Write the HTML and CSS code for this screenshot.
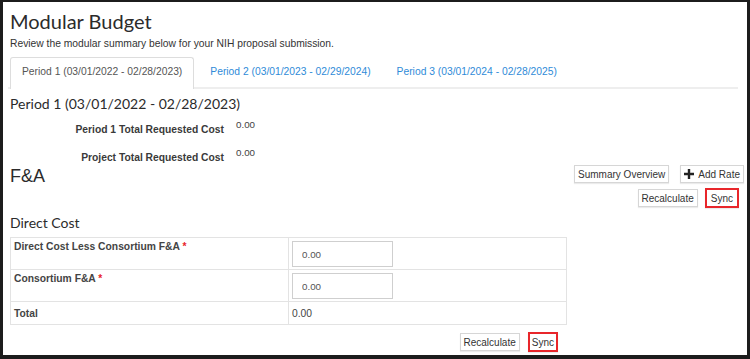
FILE: index.html
```html
<!DOCTYPE html>
<html lang="en">
<head>
    <meta charset="UTF-8">
    <meta name="viewport" content="width=device-width, initial-scale=1.0">
    <title>Modular Budget</title>
    <link rel="stylesheet" href="styles.css">
</head>
<body>
<div class="frame">
    <h1 class="page-title">Modular Budget</h1>
    <p class="page-desc">Review the modular summary below for your NIH proposal submission.</p>

    <ul class="tabs">
        <li class="tab active">Period 1 (03/01/2022 - 02/28/2023)</li>
        <li class="tab">Period 2 (03/01/2023 - 02/29/2024)</li>
        <li class="tab">Period 3 (03/01/2024 - 02/28/2025)</li>
    </ul>

    <h2 class="period-title">Period 1 (03/01/2022 - 02/28/2023)</h2>
    <div class="cost-list">
        <div class="cost-row">
            <span class="cost-label">Period 1 Total Requested Cost</span>
            <span class="cost-value">0.00</span>
        </div>
        <div class="cost-row">
            <span class="cost-label">Project Total Requested Cost</span>
            <span class="cost-value">0.00</span>
        </div>
    </div>

    <div class="fa-head">
        <h2 class="fa-title">F&amp;A</h2>
        <div class="fa-actions">
            <div class="btn-row wide">
                <button class="btn">Summary Overview</button>
                <button class="btn">
                    <svg width="10" height="10" viewBox="0 0 10 10"><path d="M5 0v10M0 5h10" stroke="#222" stroke-width="2.4"/></svg>
                    Add Rate
                </button>
            </div>
            <div class="btn-row">
                <button class="btn">Recalculate</button>
                <button class="btn btn-mark">Sync</button>
            </div>
        </div>
    </div>

    <h3 class="section-title">Direct Cost</h3>
    <div class="cost-table-wrap">
        <table class="cost-table">
            <tr>
                <td class="label-cell">Direct Cost Less Consortium F&amp;A <span class="req">*</span></td>
                <td><input type="text" class="cost-input" value="0.00"></td>
            </tr>
            <tr>
                <td class="label-cell">Consortium F&amp;A <span class="req">*</span></td>
                <td><input type="text" class="cost-input" value="0.00"></td>
            </tr>
            <tr class="total-row">
                <td class="label-cell">Total</td>
                <td class="total-value">0.00</td>
            </tr>
        </table>
        <div class="btn-row table-actions">
            <button class="btn">Recalculate</button>
            <button class="btn btn-mark btn-mark-sm">Sync</button>
        </div>
    </div>
</div>
</body>
</html>
```

FILE: styles.css
```css
:root {
    --text-color: #333333;
    --muted-color: #555555;
    --link-color: #2f8bd8;
    --border-color: #dddddd;
    --mark-color: #e8262b;
}

* {
    box-sizing: border-box;
    margin: 0;
    padding: 0;
}

body {
    font-family: "Liberation Sans", Arial, sans-serif;
    font-size: 10.3px;
    color: var(--text-color);
    background: #ffffff;
}

.frame {
    width: 750px;
    height: 359px;
    border-style: solid;
    border-color: #1c1c1c;
    border-width: 2px 3px 4px 3px;
    padding: 0 3px 0 5px;
    overflow: hidden;
}

.page-title {
    font-family: Lato, "Open Sans", sans-serif;
    font-weight: 400;
    font-size: 20px;
    line-height: 24px;
    margin-top: 7px;
    margin-left: 2px;
    color: #2b2b2b;
}

.page-desc {
    font-size: 10.3px;
    line-height: 14px;
    margin-top: 4px;
    margin-left: 2px;
}

.tabs {
    list-style: none;
    display: flex;
    margin-top: 6px;
    border-bottom: 2px solid #eeeeee;
    margin-right: 6px;
}

.tab {
    height: 30px;
    line-height: 28px;
    padding: 0 12px;
    font-size: 10.3px;
    color: var(--link-color);
    border: 1px solid transparent;
    border-bottom: none;
    margin-bottom: -2px;
    text-align: center;
}

.tab.active {
    color: var(--muted-color);
    background: #ffffff;
    border-color: var(--border-color);
    border-radius: 3px 3px 0 0;
    height: 32px;
    margin-left: 2px;
    margin-right: 3px;
    padding: 0 11px;
}

.period-title {
    font-family: Lato, "Open Sans", sans-serif;
    font-weight: 400;
    font-size: 14px;
    line-height: 18px;
    margin-top: 6px;
    margin-left: 2px;
    color: #2b2b2b;
}

.cost-list {
    display: flex;
    flex-direction: column;
    gap: 12px;
    margin-top: 6px;
}

.cost-row {
    display: flex;
    align-items: flex-start;
    height: 16px;
}

.cost-label {
    width: 216px;
    text-align: right;
    font-weight: bold;
    font-size: 10.3px;
    padding-top: 5px;
    color: #3a3a3a;
}

.cost-value {
    margin-left: 12px;
    font-size: 9.8px;
    color: #444;
}

.fa-head {
    display: flex;
    justify-content: space-between;
    align-items: flex-start;
    margin-top: 2px;
}

.fa-title {
    font-family: "Liberation Sans", Arial, sans-serif;
    font-weight: 400;
    font-size: 18px;
    line-height: 20px;
    margin-top: 1px;
    margin-left: 2px;
    color: #2b2b2b;
}

.fa-actions {
    display: flex;
    flex-direction: column;
    align-items: flex-end;
    gap: 5px;
    margin-top: 0;
}

.btn-row {
    display: flex;
    gap: 7px;
    align-items: center;
}

.btn-row.wide {
    gap: 11px;
}

.fa-actions .btn-row:last-child {
    margin-right: 5px;
}

.btn {
    font-family: "Liberation Sans", Arial, sans-serif;
    font-size: 10px;
    color: #333;
    background: #ffffff;
    border: 1px solid #d6d6d6;
    box-shadow: 0 1px 1px rgba(0, 0, 0, 0.08);
    height: 18px;
    padding: 0 3px;
    display: inline-flex;
    align-items: center;
    gap: 4px;
}

.btn-mark {
    border: 2px solid var(--mark-color);
    height: 20px;
    padding: 0 4px;
}

.btn-mark-sm {
    padding: 0 2px;
}

.section-title {
    font-family: Lato, "Open Sans", sans-serif;
    font-weight: 400;
    font-size: 14px;
    line-height: 18px;
    margin-top: 6px;
    margin-left: 2px;
    color: #2b2b2b;
}

.cost-table-wrap {
    width: 557px;
    margin-left: 2px;
    margin-top: 5px;
}

.cost-table {
    width: 100%;
    border-collapse: collapse;
    border: 1px solid #e3e3e3;
}

.cost-table td {
    border: 1px solid #e3e3e3;
    vertical-align: top;
    padding: 3px 3px 0 3px;
    font-size: 10.3px;
    color: #444;
}

.cost-table tr {
    height: 32px;
}

.cost-table .total-row {
    height: 23px;
}

.cost-table .total-row td {
    vertical-align: middle;
    padding-top: 0;
}

.label-cell {
    width: 278px;
    font-weight: bold;
    color: #3a3a3a;
}

.req {
    color: var(--mark-color);
}

.cost-input {
    display: block;
    width: 101px;
    height: 26px;
    border: 1px solid #cfcfcf;
    padding: 0 9px;
    font-family: "Liberation Sans", Arial, sans-serif;
    font-size: 9.8px;
    color: #555;
}

.table-actions {
    justify-content: flex-end;
    margin-top: 7px;
    margin-right: 9px;
    gap: 8px;
}
```
